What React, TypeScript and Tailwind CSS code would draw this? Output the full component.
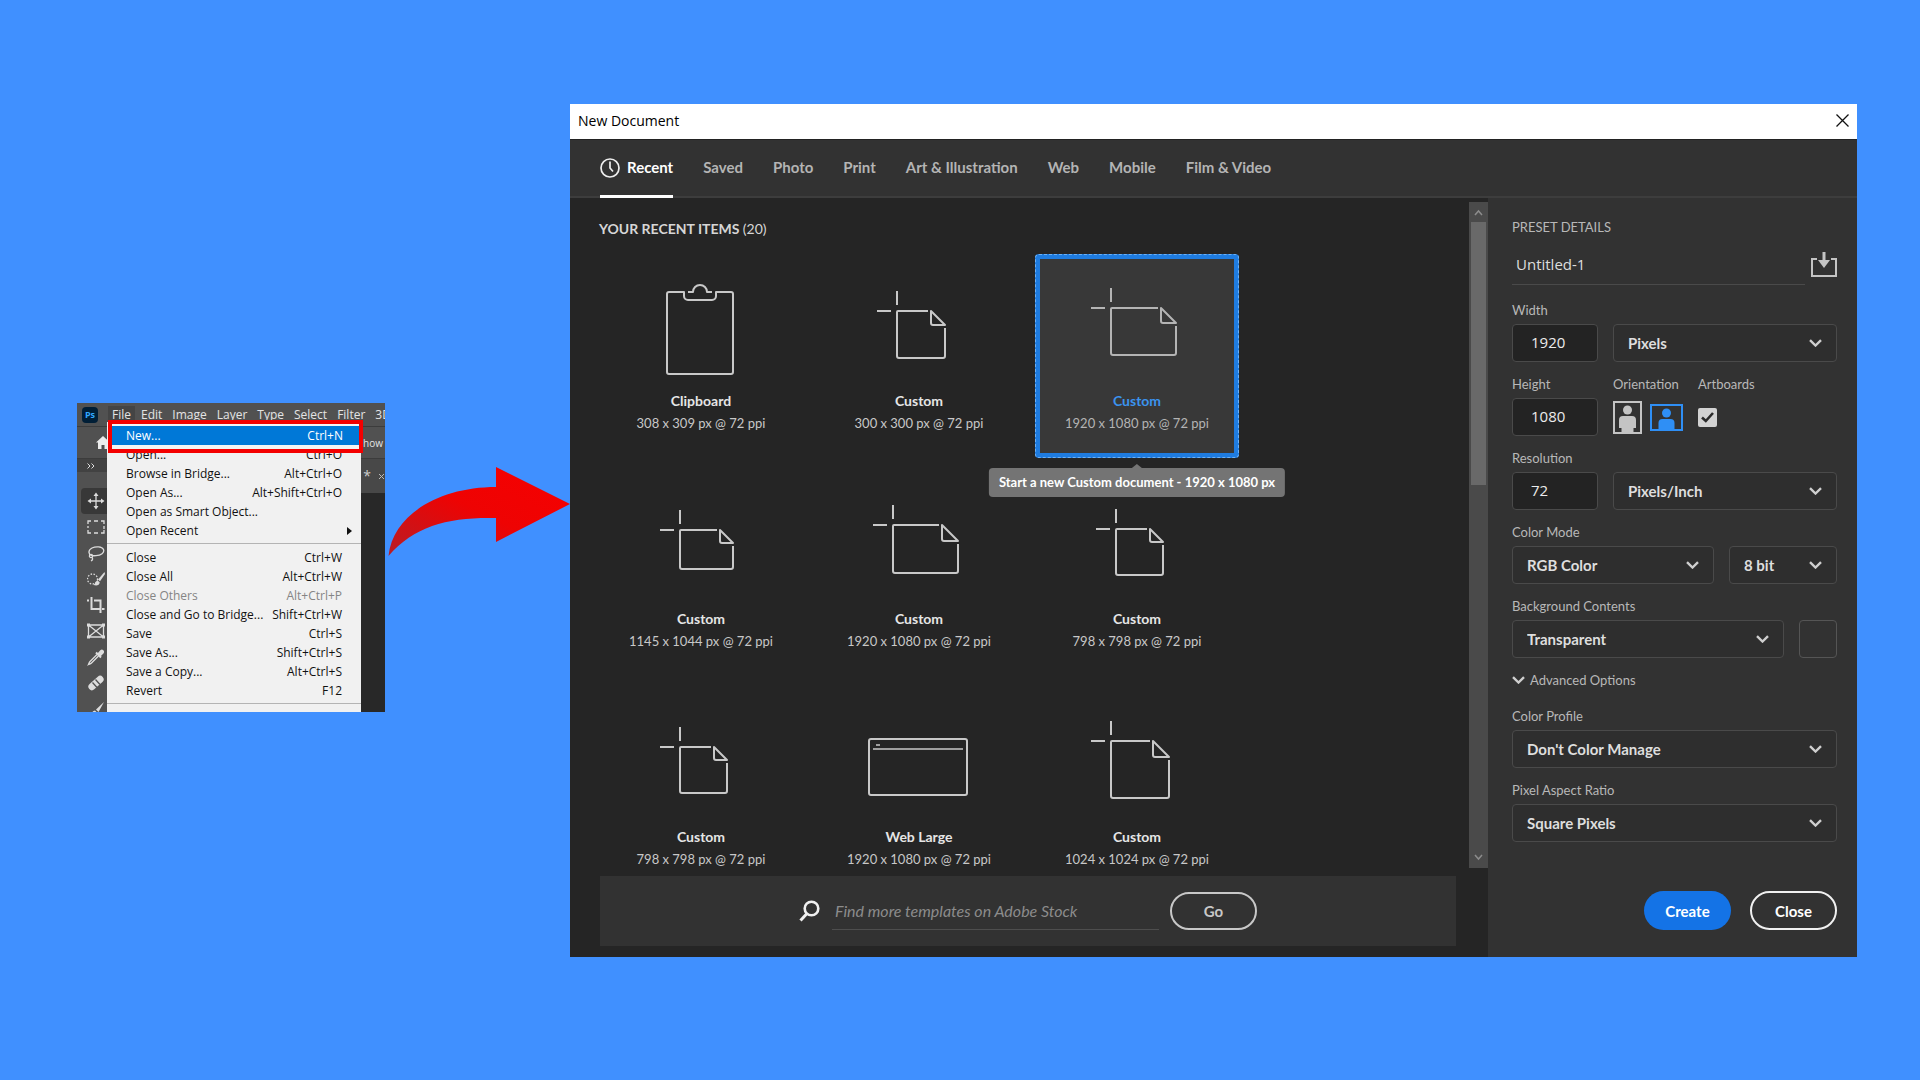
import { useState, type ReactNode } from "react";
import clsx from "clsx";

const UI_FONT = "font-['Lato','Noto_Sans',sans-serif]";
const WIN_FONT = "font-['Open_Sans','Noto_Sans',sans-serif]";

const TABS = ["Recent", "Saved", "Photo", "Print", "Art & Illustration", "Web", "Mobile", "Film & Video"];

type Preset = {
  name: string;
  size: string;
  icon: "clipboard" | "browser" | "doc";
  doc?: [x: number, y: number, w: number, h: number, fold: number];
};

const PRESETS: Preset[] = [
  { name: "Clipboard", size: "308 x 309 px @ 72 ppi", icon: "clipboard" },
  { name: "Custom", size: "300 x 300 px @ 72 ppi", icon: "doc", doc: [80, 57, 48, 47, 14] },
  { name: "Custom", size: "1920 x 1080 px @ 72 ppi", icon: "doc", doc: [76, 54, 65, 47, 15] },
  { name: "Custom", size: "1145 x 1044 px @ 72 ppi", icon: "doc", doc: [81, 58, 53, 39, 13] },
  { name: "Custom", size: "1920 x 1080 px @ 72 ppi", icon: "doc", doc: [76, 53, 65, 48, 16] },
  { name: "Custom", size: "798 x 798 px @ 72 ppi", icon: "doc", doc: [81, 57, 47, 46, 13] },
  { name: "Custom", size: "798 x 798 px @ 72 ppi", icon: "doc", doc: [81, 57, 47, 46, 13] },
  { name: "Web Large", size: "1920 x 1080 px @ 72 ppi", icon: "browser" },
  { name: "Custom", size: "1024 x 1024 px @ 72 ppi", icon: "doc", doc: [76, 51, 58, 57, 16] },
];

type MenuEntry = { label: string; keys?: string; disabled?: boolean; submenu?: boolean };

const FILE_MENU: MenuEntry[][] = [
  [
    { label: "Open...", keys: "Ctrl+O" },
    { label: "Browse in Bridge...", keys: "Alt+Ctrl+O" },
    { label: "Open As...", keys: "Alt+Shift+Ctrl+O" },
    { label: "Open as Smart Object..." },
    { label: "Open Recent", submenu: true },
  ],
  [
    { label: "Close", keys: "Ctrl+W" },
    { label: "Close All", keys: "Alt+Ctrl+W" },
    { label: "Close Others", keys: "Alt+Ctrl+P", disabled: true },
    { label: "Close and Go to Bridge...", keys: "Shift+Ctrl+W" },
    { label: "Save", keys: "Ctrl+S" },
    { label: "Save As...", keys: "Shift+Ctrl+S" },
    { label: "Save a Copy...", keys: "Alt+Ctrl+S" },
    { label: "Revert", keys: "F12" },
  ],
];

/* ---------- Photoshop window with the File menu open ---------- */

function Tool({ children, active }: { children: ReactNode; active?: boolean }) {
  return (
    <button
      className={clsx(
        "flex h-[26px] w-[26px] shrink-0 items-center justify-start rounded-l-sm pl-[6px]",
        active && "bg-[#383838]",
      )}
    >
      <svg width="18" height="18" viewBox="0 0 18 18" fill="none" stroke="#dcdcdc" strokeWidth="1.3" className="shrink-0">
        {children}
      </svg>
    </button>
  );
}

function Toolbox() {
  return (
    <div className="flex w-[30px] shrink-0 flex-col items-end bg-[#515151] pt-[16px]">
      <Tool active>
        <path d="M9 2v14M2 9h14" />
        <path d="M9 0.5 6.5 4h5zM9 17.5 6.5 14h5zM0.5 9 4 6.5v5zM17.5 9 14 6.5v5z" fill="#dcdcdc" stroke="none" />
      </Tool>
      <Tool>
        <path d="M1 6V3h3M7 3h4M14 3h3v3M17 8v3M17 12v3h-3M11 15H7M4 15H1v-3M1 10V8" />
      </Tool>
      <Tool>
        <path d="M4.5 11.5C1 10 1 6 5 4c4-2 10-1.5 11.5 1.5 1.2 3-2.5 6-7.5 6.2-2 .1-4 .1-4.5-.2z" />
        <circle cx="4" cy="12" r="1.6" />
        <path d="M5 13.5c1 1 .8 2.5-1 3.5" />
      </Tool>
      <Tool>
        <circle cx="5.5" cy="9" r="5" strokeDasharray="1.5 1.5" />
        <path d="M17.5 2 11 9.5l2 1.8L18 4z" fill="#dcdcdc" stroke="none" />
        <path d="M10.5 10.5c-2 .5-2 3-4 4.5 3 1 6 .5 6.2-2.7z" fill="#dcdcdc" stroke="none" />
      </Tool>
      <Tool>
        <path d="M0 4.5h2M4.5 1v12h8M7 4.5h6.5V17M15 13h2.5" strokeWidth="2" />
      </Tool>
      <Tool>
        <path d="M1.5 3h15v12h-15zM1.5 3l15 12M16.5 3l-15 12" />
        <path d="M0 1.5h3v3H0zM15 1.5h3v3h-3zM0 13.5h3v3H0zM15 13.5h3v3h-3z" fill="#dcdcdc" stroke="none" />
      </Tool>
      <Tool>
        <path d="M10 6.5 3 13.5c-1 1-1 2-1.5 3 1-.5 2-.5 3-1.5l7-7" />
        <path d="m9 4.5 5 5M11 6.5l3-3.5c1-1 2.5 0 2 1.5L12.5 8z" strokeWidth="2" fill="#dcdcdc" />
      </Tool>
      <Tool>
        <rect x="0" y="5.5" width="18" height="7" rx="3.5" transform="rotate(-42 9 9)" fill="#dcdcdc" stroke="none" />
        <path d="m5.5 8.5 4.5 5M8.5 5.5l4.5 5" stroke="#515151" />
      </Tool>
      <Tool>
        <path d="M17 2 9 9.5l2.5 2.5zM8 10.5c-3 .5-3 3.5-5.5 5 3 1.5 8 1 8-2.5z" fill="#dcdcdc" stroke="none" />
      </Tool>
    </div>
  );
}

function MenuRow({ label, keys, disabled, submenu }: MenuEntry) {
  return (
    <button
      disabled={disabled}
      className={clsx(
        "flex h-[19px] w-full items-center justify-between whitespace-nowrap pr-[19px] pl-[19px] text-left",
        disabled ? "text-[#858585]" : "text-[#111]",
      )}
    >
      <span>{label}</span>
      {keys && <span>{keys}</span>}
      {submenu && (
        <svg width="5" height="8" viewBox="0 0 5 8" className="-mr-[10px]">
          <path d="M0 0l5 4-5 4z" fill="#111" />
        </svg>
      )}
    </button>
  );
}

function FileMenuShot() {
  return (
    <section
      className={clsx(
        "relative mt-[299px] flex h-[309px] w-[308px] shrink-0 flex-col overflow-hidden bg-[#515151] text-xs leading-none text-[#e4e4e4]",
        WIN_FONT,
      )}
    >
      <nav className="flex h-[23px] shrink-0 items-center whitespace-nowrap pl-[5px]">
        <span className="flex h-4 w-4 shrink-0 items-center justify-center rounded-sm bg-[#001e36] text-[9px] font-bold text-[#31a8ff]">
          Ps
        </span>
        <button className="ml-[10px] h-[18px] shrink-0 bg-[#444] px-1">File</button>
        <div className="ml-[6px] flex shrink-0 gap-[10px]">
          {["Edit", "Image", "Layer", "Type", "Select", "Filter", "3D"].map((item) => (
            <button key={item}>{item}</button>
          ))}
        </div>
      </nav>
      <div className="flex h-[33px] shrink-0 items-center border-y border-[#3c3c3c] bg-[#515151] pl-[19px]">
        <svg width="14" height="13" viewBox="0 0 14 13" fill="#ececec" className="shrink-0">
          <path d="M7 0 0 6.5h2V13h3.5V9h3v4H12V6.5h2z" />
        </svg>
        <span className="ml-[253px] shrink-0 text-[10px] whitespace-nowrap">how T</span>
      </div>
      <div className="flex min-h-0 flex-1">
        <div className="flex flex-col">
          <div className="flex h-[13px] shrink-0 items-center bg-[#424242] pl-[10px]">
            <svg width="8" height="6" viewBox="0 0 8 6" fill="none" stroke="#ddd">
              <path d="M.5.5 3 3 .5 5.5M4.5.5 7 3 4.5 5.5" />
            </svg>
          </div>
          <Toolbox />
        </div>
        <div className="flex-1 bg-[#282828]">
          <div className="flex h-[34px] items-center justify-end gap-2 bg-[#484848] text-[#ccc]">
            <span className="text-sm">) *</span>
            <svg width="6" height="7" viewBox="0 0 6 7" fill="none" stroke="#bbb">
              <path d="m0 1 5 5M5 1 0 6" />
            </svg>
          </div>
        </div>
      </div>

      <div className="absolute top-[19px] left-[30px] w-[254px] bg-[#f1f1f1] pt-[23px]">
        {FILE_MENU.map((group, i) => (
          <div key={i} className="border-b border-[#b4b4b4] pb-[3px] not-first:pt-[4px]">
            {group.map((entry) => (
              <MenuRow key={entry.label} {...entry} />
            ))}
          </div>
        ))}
        <div className="h-[10px]" />
      </div>
      <div className="absolute top-[17px] left-[31px] w-[255px] border-4 border-[#f40000] bg-[#f4f4f4] pt-[2px] pb-[4px]">
        <button className="flex h-[19px] w-full items-center justify-between bg-[#0078d7] pr-[16px] pl-[14px] text-white">
          <span>New...</span>
          <span>Ctrl+N</span>
        </button>
      </div>
    </section>
  );
}

function RedArrow() {
  return (
    <svg width="185" height="90" viewBox="0 0 185 90" className="relative z-10 mt-[363px] w-[185px] shrink-0">
      <defs>
        <linearGradient id="arrow" x1="0" y1="1" x2="1" y2="0">
          <stop offset="0" stopColor="#b81d24" />
          <stop offset="0.5" stopColor="#ee0303" />
          <stop offset="1" stopColor="#f70000" />
        </linearGradient>
      </defs>
      <path d="M3.5 89C8 47 55 20 111 20V0l74 37-74 38V51C65 50 30 58 3.5 89z" fill="url(#arrow)" />
    </svg>
  );
}

/* ---------- New Document dialog ---------- */

function PresetIcon({ icon, doc }: Preset) {
  let shape: ReactNode;
  if (icon === "clipboard") {
    shape = (
      <>
        <path d="M84 38H70a2 2 0 0 0-2 2v78a2 2 0 0 0 2 2h62a2 2 0 0 0 2-2V40a2 2 0 0 0-2-2h-15v4a4 4 0 0 1-4 4H89a4 4 0 0 1-4-4v-4z" />
        <path d="M89 38h5a7 7 0 0 1 14 0h5" />
      </>
    );
  } else if (icon === "browser") {
    shape = (
      <>
        <rect x="52" y="49" width="98" height="56" rx="2" />
        <path d="M56 59h90M59 55h4" strokeWidth="1.5" />
      </>
    );
  } else {
    const [x, y, w, h, f] = doc!;
    const r = x + w;
    const b = y + h;
    shape = (
      <>
        <path d={`M${x} ${y - 20}v14M${x - 20} ${y}h14`} />
        <path d={`M${r - f - 3} ${y}H${x + 1}q-1 0-1 1V${b - 2}q0 2 2 2H${r - 2}q2 0 2-2V${y + f + 3}`} />
        <path d={`M${r - f} ${y}v${f - 2}q0 2 2 2H${r}z`} />
      </>
    );
  }
  return (
    <svg width="204" height="132" viewBox="0 0 204 132" fill="none" stroke="currentColor" strokeWidth="2" strokeLinejoin="round">
      {shape}
    </svg>
  );
}

function PresetCard({ preset, selected, onSelect }: { preset: Preset; selected: boolean; onSelect: () => void }) {
  return (
    <div className="relative h-[204px]">
      <button
        onClick={onSelect}
        className={clsx(
          "flex h-full w-full flex-col items-center text-[13px] leading-[22px] whitespace-nowrap",
          selected
            ? "rounded bg-[#383838] text-[#b4b4b4] outline-1 -outline-offset-1 outline-[#6db1f5] outline-dashed inset-ring-5 inset-ring-[#1f7ce0]"
            : "text-[#c8c8c8]",
        )}
      >
        <PresetIcon {...preset} />
        <span className={clsx("mt-1 text-sm leading-[22px] font-bold", selected ? "text-[#3b93ee]" : "text-[#e6e6e6]")}>
          {preset.name}
        </span>
        <span>{preset.size}</span>
      </button>
      {selected && (
        <div
          role="tooltip"
          className="absolute top-full left-1/2 z-10 mt-[10px] flex h-[29px] -translate-x-1/2 items-center rounded bg-[#747474] px-[10px] text-[13px] font-bold whitespace-nowrap text-white"
        >
          <span className="absolute -top-1 left-1/2 h-0 w-0 -translate-x-1/2 border-x-5 border-b-4 border-x-transparent border-b-[#747474]" />
          Start a new Custom document - 1920 x 1080 px
        </div>
      )}
    </div>
  );
}

function Chevron({ className }: { className?: string }) {
  return (
    <svg width="13" height="8" viewBox="0 0 13 8" fill="none" stroke="#cfcfcf" strokeWidth="2.4" className={className}>
      <path d="M1 1.2 6.5 6.5 12 1.2" />
    </svg>
  );
}

function Select({ id, label, value, className }: { id: string; label?: string; value: string; className?: string }) {
  return (
    <div className={clsx("relative", className)}>
      <select
        id={id}
        aria-label={label}
        className="h-[38px] w-full appearance-none rounded border border-[#4a4a4a] bg-[#2e2e2e] pr-8 pl-[14px] text-[15px] font-bold text-[#dedede]"
      >
        <option>{value}</option>
      </select>
      <Chevron className="pointer-events-none absolute top-[15px] right-[15px]" />
    </div>
  );
}

function NumberBox({ id, value }: { id: string; value: string }) {
  return (
    <input
      id={id}
      defaultValue={value}
      className={clsx(
        "h-[38px] w-[86px] rounded border border-[#4a4a4a] bg-[#232323] pb-[2px] pl-[18px] text-[15px] text-[#ececec]",
        WIN_FONT,
      )}
    />
  );
}

function Label({ htmlFor, children }: { htmlFor: string; children: ReactNode }) {
  return (
    <label htmlFor={htmlFor} className="mt-3 mb-1 block h-5">
      {children}
    </label>
  );
}

function PresetDetails() {
  return (
    <aside className="flex w-[369px] shrink-0 flex-col bg-[#323232] pt-[19px] pr-5 pb-[27px] pl-6 text-[13px] leading-5 text-[#b8b8b8]">
      <h2 className="h-5">PRESET DETAILS</h2>
      <div className="mt-[9px] mb-[3px] flex gap-[6px]">
        <input
          aria-label="Document name"
          defaultValue="Untitled-1"
          className={clsx(
            "h-[39px] min-w-0 flex-1 border-b border-[#4a4a4a] pb-[2px] pl-1 text-[15px] text-[#dedede]",
            WIN_FONT,
          )}
        />
        <button aria-label="Save preset" className="pb-[2px]">
          <svg width="26" height="26" viewBox="0 0 26 26" fill="none" stroke="#c4c4c4" strokeWidth="2">
            <path d="M6 7H1v17h24V7h-5" />
            <path d="M11.5 0h3v8H19l-6 8-6-8h4.5z" fill="#c4c4c4" stroke="none" />
          </svg>
        </button>
      </div>

      <Label htmlFor="width">Width</Label>
      <div className="flex gap-[15px]">
        <NumberBox id="width" value="1920" />
        <Select id="units" label="Units" value="Pixels" className="flex-1" />
      </div>

      <div className="flex">
        <div className="w-[101px]">
          <Label htmlFor="height">Height</Label>
          <NumberBox id="height" value="1080" />
        </div>
        <div className="w-[85px]">
          <span className="mt-3 mb-1 block h-5">Orientation</span>
          <div className="flex h-[38px] items-center gap-2">
            <button aria-label="Portrait">
              <svg width="29" height="33" viewBox="0 0 29 33" fill="#c4c4c4">
                <rect x="1" y="1" width="27" height="31" fill="none" stroke="#c4c4c4" strokeWidth="2" />
                <circle cx="14.5" cy="9" r="4.5" />
                <path d="M10 15h9q4 0 4 4v8h-2.5v5h-12v-5H6v-8q0-4 4-4z" />
              </svg>
            </button>
            <button aria-label="Landscape">
              <svg width="33" height="27" viewBox="0 0 33 27" fill="#2f8ff5">
                <rect x="1" y="1" width="31" height="25" fill="none" stroke="#2f8ff5" strokeWidth="2" />
                <circle cx="16.5" cy="9" r="4.5" />
                <path d="M12.5 15h8q4 0 4 4v7h-16v-7q0-4 4-4z" />
              </svg>
            </button>
          </div>
        </div>
        <div>
          <Label htmlFor="artboards">Artboards</Label>
          <div className="relative flex h-[38px] w-5 items-center">
            <input id="artboards" type="checkbox" defaultChecked className="peer h-[19px] w-[19px] appearance-none rounded-xs bg-[#d2d2d2]" />
            <svg
              width="13"
              height="11"
              viewBox="0 0 13 11"
              fill="none"
              stroke="#2a2a2a"
              strokeWidth="2.6"
              className="pointer-events-none absolute left-[3px] hidden peer-checked:block"
            >
              <path d="m1 5.5 3.8 3.5L12 1" />
            </svg>
          </div>
        </div>
      </div>

      <Label htmlFor="resolution">Resolution</Label>
      <div className="flex gap-[15px]">
        <NumberBox id="resolution" value="72" />
        <Select id="resolution-units" label="Resolution units" value="Pixels/Inch" className="flex-1" />
      </div>

      <Label htmlFor="color-mode">Color Mode</Label>
      <div className="flex gap-[15px]">
        <Select id="color-mode" value="RGB Color" className="flex-1" />
        <Select id="depth" label="Bit depth" value="8 bit" className="w-[108px]" />
      </div>

      <Label htmlFor="background">Background Contents</Label>
      <div className="flex gap-[15px]">
        <Select id="background" value="Transparent" className="flex-1" />
        <button aria-label="Background color" className="h-[38px] w-[38px] rounded border border-[#555]" />
      </div>

      <button className="mt-3 mb-1 flex h-5 items-center gap-[5px]">
        <Chevron />
        Advanced Options
      </button>

      <Label htmlFor="profile">Color Profile</Label>
      <Select id="profile" value="Don't Color Manage" />

      <Label htmlFor="aspect">Pixel Aspect Ratio</Label>
      <Select id="aspect" value="Square Pixels" />

      <div className="mt-auto flex justify-end gap-[19px] pt-8 text-[15px] font-bold text-white">
        <button className="h-[39px] w-[87px] rounded-full bg-[#1473e6]">Create</button>
        <button className="h-[39px] w-[87px] rounded-full border-2 border-[#f0f0f0]">Close</button>
      </div>
    </aside>
  );
}

function NewDocumentDialog() {
  const [tab, setTab] = useState("Recent");
  const [selected, setSelected] = useState(2);

  return (
    <section className={clsx("flex min-w-0 flex-1 flex-col bg-[#252525]", UI_FONT)}>
      <header className={clsx("flex h-[35px] items-center justify-between bg-white px-2 pb-[2px] text-sm text-black", WIN_FONT)}>
        <h1>New Document</h1>
        <button aria-label="Close window">
          <svg width="13" height="13" viewBox="0 0 13 13" fill="none" stroke="#111" strokeWidth="1.3">
            <path d="m.5.5 12 12M12.5.5l-12 12" />
          </svg>
        </button>
      </header>

      <nav className="flex h-[59px] gap-[30px] border-t border-b-2 border-t-[#222] border-b-[#3d3d3d] bg-[#323232] pl-[30px] text-[15px] text-[#b4b4b4]">
        {TABS.map((name) => (
          <button
            key={name}
            onClick={() => setTab(name)}
            className={clsx(
              "flex h-[58px] items-center border-b-3 font-bold whitespace-nowrap",
              tab === name ? "border-white text-white" : "border-transparent",
            )}
          >
            {name === "Recent" && (
              <svg width="20" height="20" viewBox="0 0 20 20" fill="none" stroke="#eee" strokeWidth="1.7" className="mr-[7px]">
                <circle cx="10" cy="10" r="9" />
                <path d="M10 3.5V10l3 3.5" />
              </svg>
            )}
            {name}
          </button>
        ))}
      </nav>

      <div className="flex">
        <div className="min-w-0 flex-1">
          <div className="flex h-[670px] overflow-hidden">
            <div className="min-w-0 flex-1 pl-[29px]">
              <h2 className="mt-[21px] mb-[15px] h-5 text-sm leading-5 font-bold text-[#d6d6d6]">
                YOUR RECENT ITEMS <span className="font-normal">(20)</span>
              </h2>
              <div className="grid grid-cols-[repeat(3,204px)] gap-[14px]">
                {PRESETS.map((preset, i) => (
                  <PresetCard key={i} preset={preset} selected={i === selected} onSelect={() => setSelected(i)} />
                ))}
              </div>
            </div>
            <div className="mt-1 flex w-[19px] flex-col items-center bg-[#4a4a4a]">
              <svg width="9" height="20" viewBox="0 0 9 20" fill="none" stroke="#8c8c8c" strokeWidth="1.5">
                <path d="m1 13 3.5-4L8 13" />
              </svg>
              <div className="h-[263px] w-[15px] bg-[#696969]" />
              <svg width="9" height="20" viewBox="0 0 9 20" fill="none" stroke="#8c8c8c" strokeWidth="1.5" className="mt-auto">
                <path d="m1 7 3.5 4L8 7" />
              </svg>
            </div>
          </div>

          <form
            onSubmit={(e) => e.preventDefault()}
            className="mt-2 mr-8 mb-[11px] ml-[30px] flex h-[70px] items-center justify-center bg-[#323232]"
          >
            <svg width="21" height="22" viewBox="0 0 21 22" fill="none" stroke="#f0f0f0" strokeWidth="2.6">
              <circle cx="12.5" cy="8.5" r="6.8" />
              <path d="m8 13.5-6.5 7" strokeWidth="3" />
            </svg>
            <input
              aria-label="Find more templates on Adobe Stock"
              placeholder="Find more templates on Adobe Stock"
              className="ml-3 h-[38px] w-[327px] border-b border-[#4e4e4e] pl-[3px] text-base italic placeholder:text-[#8c8c8c]"
            />
            <button className="ml-[11px] h-[38px] w-[87px] rounded-full border-2 border-[#c8c8c8] text-[15px] font-bold text-[#c8c8c8]">
              Go
            </button>
          </form>
        </div>
        <PresetDetails />
      </div>
    </section>
  );
}

export default function App() {
  return (
    <main className="flex min-h-screen items-start bg-[#4090ff] pt-[104px] pr-[63px] pb-[104px] pl-[77px]">
      <FileMenuShot />
      <RedArrow />
      <NewDocumentDialog />
    </main>
  );
}
